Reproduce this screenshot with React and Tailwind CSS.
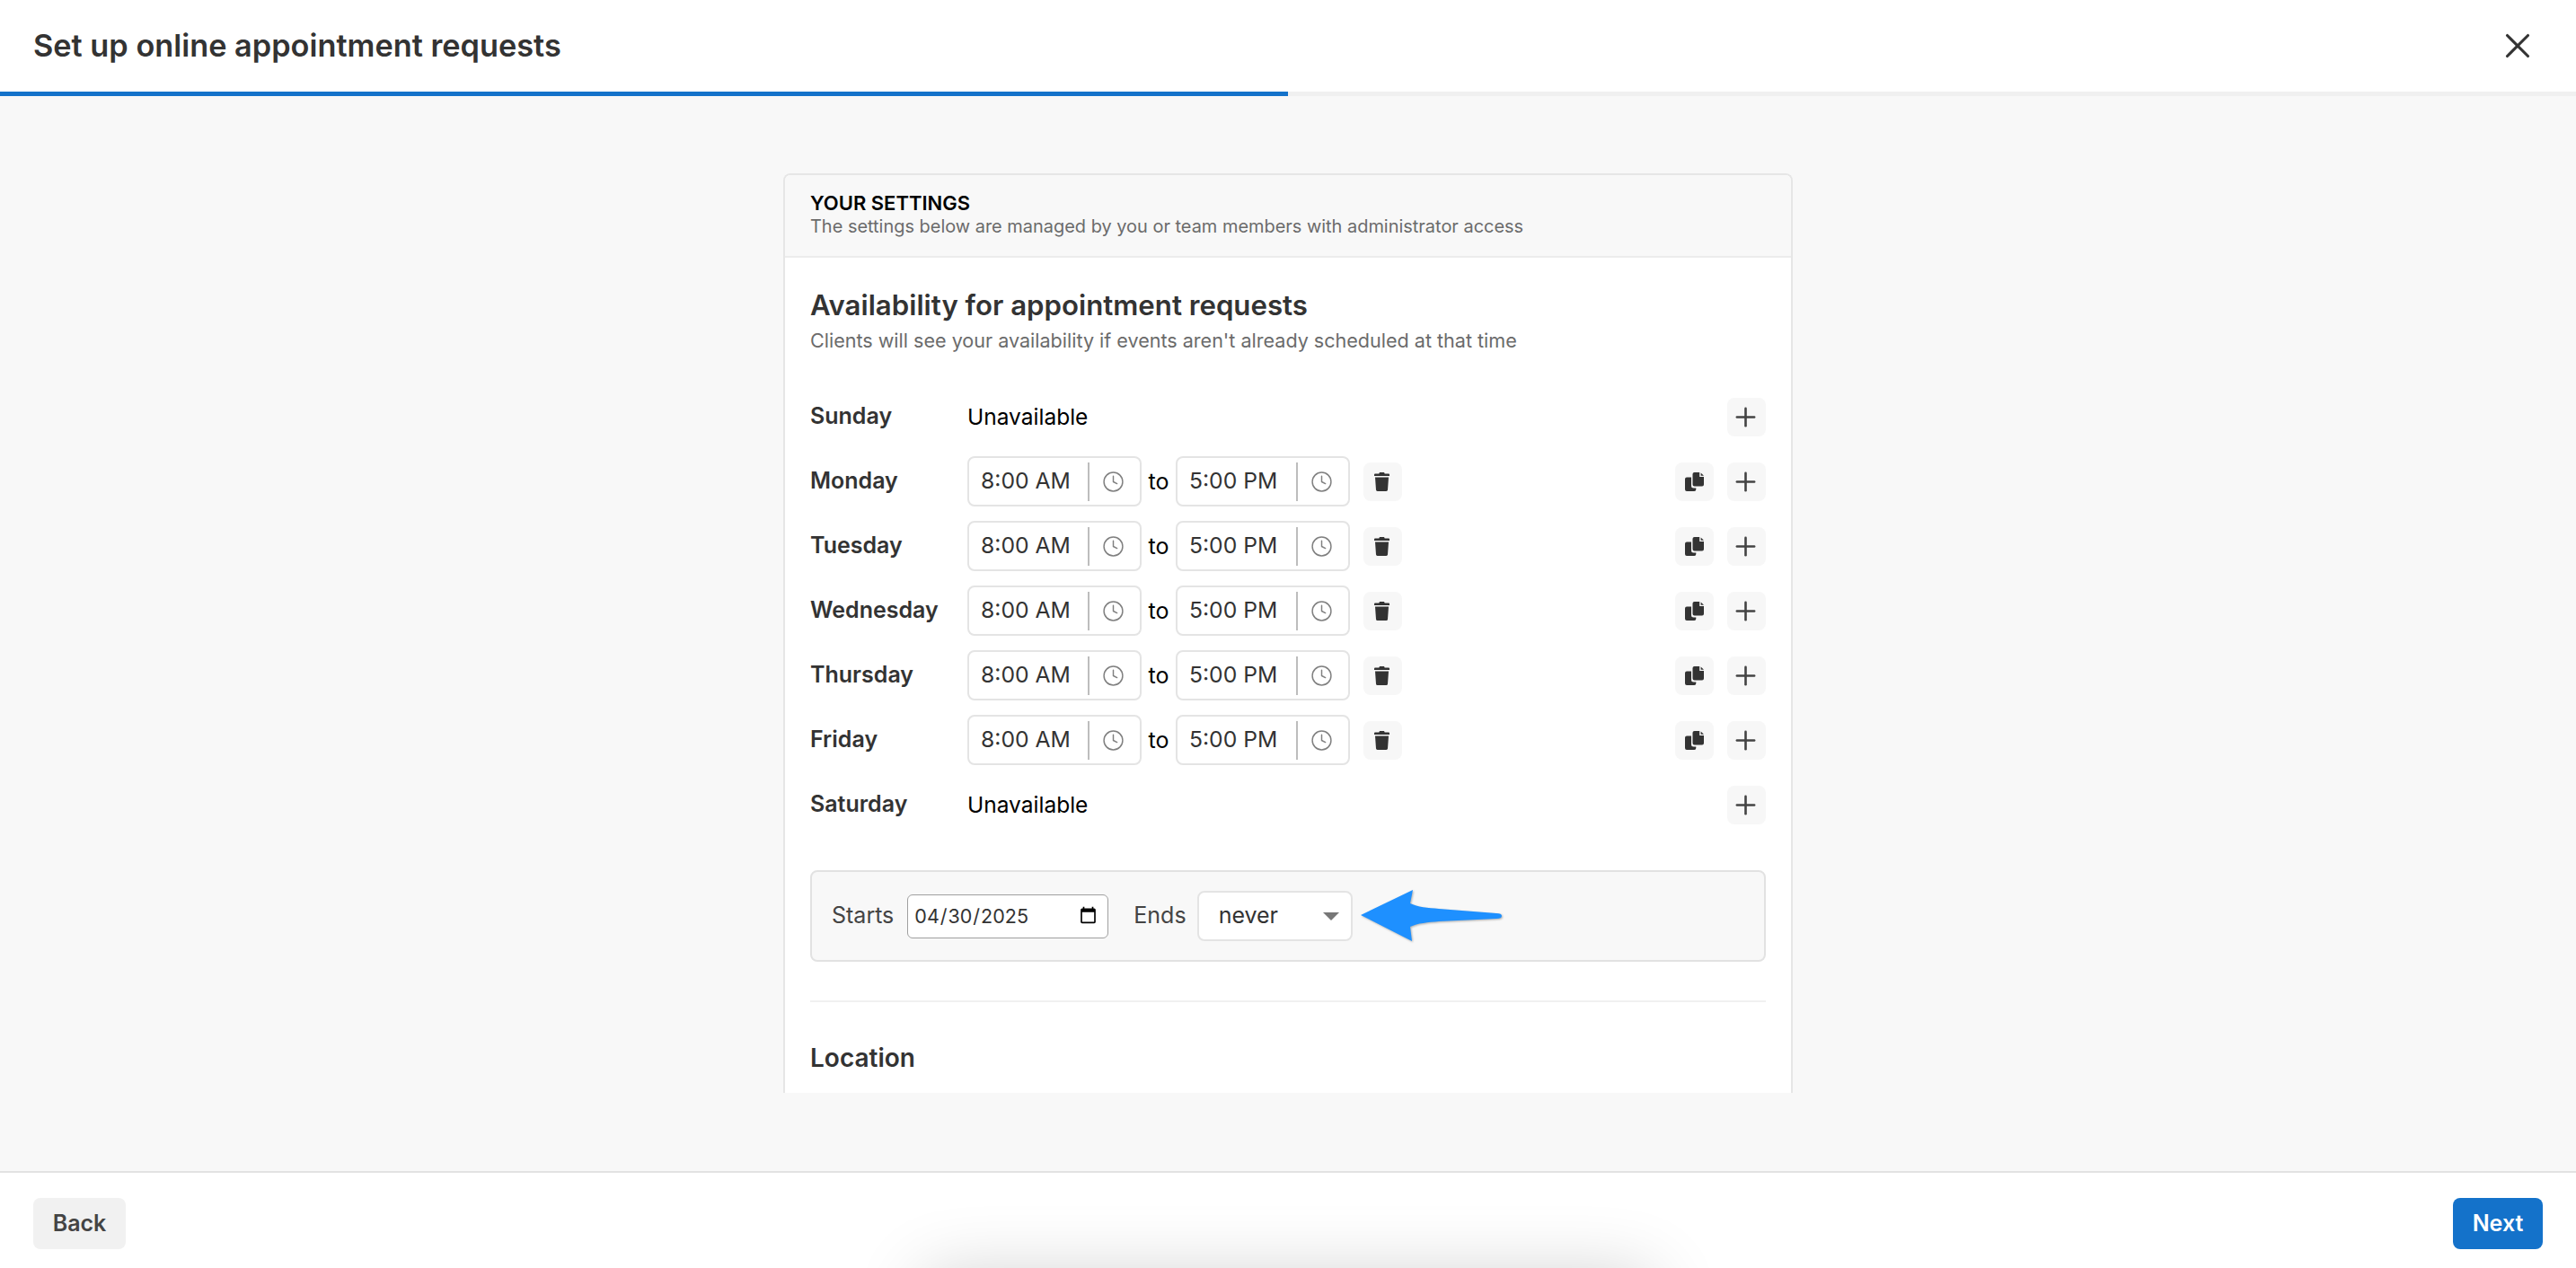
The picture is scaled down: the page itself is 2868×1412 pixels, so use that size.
import { Clock, Plus, X } from 'lucide-react';

const days = [
  { name: 'Sunday', open: false },
  { name: 'Monday', open: true },
  { name: 'Tuesday', open: true },
  { name: 'Wednesday', open: true },
  { name: 'Thursday', open: true },
  { name: 'Friday', open: true },
  { name: 'Saturday', open: false },
];

function TrashIcon() {
  return (
    <svg width="17" height="21" viewBox="0 0 17 21" fill="#333333" className="mr-[2px]">
      <path d="M6 0h5l.7 1.5H16a1 1 0 0 1 1 1V4H0V2.5a1 1 0 0 1 1-1h4.3z" />
      <path d="M1 5.5h15l-1 14a1.6 1.6 0 0 1-1.6 1.5H3.6A1.6 1.6 0 0 1 2 19.5z" />
    </svg>
  );
}

function CopyIcon() {
  return (
    <svg width="21" height="21" viewBox="0 0 21 21" fill="#333333">
      <path d="M2 5.5h5V15a2.5 2.5 0 0 0 2.5 2.5h2.8V19a2 2 0 0 1-2 2H2a2 2 0 0 1-2-2V7.5a2 2 0 0 1 2-2z" />
      <path d="M10.5 0h5.7v5h4.8v8.5a2 2 0 0 1-2 2h-8.5a2 2 0 0 1-2-2V2a2 2 0 0 1 2-2z" />
      <path d="M17.6 .4 21 3.8h-3.4z" />
    </svg>
  );
}

function TimeInput({ value }) {
  return (
    <div className="flex h-[56px] w-[194px] items-center rounded-[8px] border-2 border-[#e4e4e4] bg-white">
      <span className="w-[132px] pl-[13px] text-[24.7px] text-[#333333]">{value}</span>
      <span className="h-[43px] w-[2px] bg-[#bdbdbd]" />
      <span className="flex flex-1 items-center justify-center pr-[4px]">
        <Clock size={25} strokeWidth={1.4} color="#808080" />
      </span>
    </div>
  );
}

function IconButton({ children }) {
  return (
    <button type="button" className="flex h-[43px] w-[43px] items-center justify-center rounded-[8px] bg-[#f7f7f7]">
      {children}
    </button>
  );
}

function DayRow({ day }) {
  return (
    <div className="flex h-[56px] items-center">
      <span className="w-[175px] text-[25px] font-semibold text-[#333333]">{day.name}</span>
      {day.open ? (
        <div className="flex items-center">
          <TimeInput value="8:00 AM" />
          <span className="w-[38px] pt-[2px] text-center text-[25px] text-black">to</span>
          <TimeInput value="5:00 PM" />
          <div className="ml-[15px]">
            <IconButton>
              <TrashIcon />
            </IconButton>
          </div>
        </div>
      ) : (
        <span className="text-[24.5px] text-black">Unavailable</span>
      )}
      <div className="ml-auto flex gap-[15px]">
        {day.open && (
          <IconButton>
            <CopyIcon />
          </IconButton>
        )}
        <IconButton>
          <Plus size={33} strokeWidth={1.9} color="#444444" className="mr-[2px]" />
        </IconButton>
      </div>
    </div>
  );
}

export default function App() {
  return (
    <div
      className="relative flex h-[1412px] flex-col overflow-hidden bg-[#f8f8f8]"
      style={{ fontFamily: 'Inter, "Liberation Sans", sans-serif' }}
    >
      <header className="flex h-[102px] items-center justify-between bg-white pl-[37px] pr-[42px]">
        <h1 className="text-[34.3px] font-semibold text-[#333333]">Set up online appointment requests</h1>
        <X size={46} strokeWidth={1.6} color="#333333" />
      </header>
      <div className="h-[5px] bg-[#f0f0f0]">
        <div className="h-full w-1/2 bg-[#1472ca]" />
      </div>

      <main className="flex flex-1 justify-center overflow-hidden pb-[87px] pt-[86px]">
        <section className="h-full w-[1124px] overflow-hidden rounded-t-[8px] border-x-2 border-t-2 border-[#e6e6e6] bg-white">
          <div className="h-[92px] border-b-2 border-[#ececec] bg-[#f8f8f8] px-[28px] pt-[18px]">
            <h2 className="text-[22px] font-semibold leading-[26px] text-black">YOUR SETTINGS</h2>
            <p className="text-[19.95px] leading-[26px] text-[#6b6b6b]">
              The settings below are managed by you or team members with administrator access
            </p>
          </div>

          <div className="px-[28px] pt-[33px]">
            <h3 className="text-[31.2px] font-semibold leading-[40px] text-[#333333]">
              Availability for appointment requests
            </h3>
            <p className="mt-[6px] text-[21.55px] leading-[26px] text-[#6b6b6b]">
              Clients will see your availability if events aren't already scheduled at that time
            </p>

            <div className="mt-[44px] flex flex-col gap-[16px]">
              {days.map((day) => (
                <DayRow key={day.name} day={day} />
              ))}
            </div>

            <div className="mt-[45px] flex h-[102px] items-center rounded-[8px] border-2 border-[#e2e2e2] bg-[#f8f8f8] pl-[22px]">
              <span className="text-[25px] text-[#444444]">Starts</span>
              <input
                type="date"
                defaultValue="2025-04-30"
                className="ml-[15px] h-[49px] w-[224px] rounded-[6px] border border-[#a0a0a0] bg-white pl-[6px] pr-[9px] text-[21.5px] text-[#333333]"
              />
              <span className="ml-[28px] text-[25px] text-[#444444]">Ends</span>
              <div className="ml-[12px] flex h-[56px] w-[173px] items-center justify-between rounded-[8px] border-2 border-[#e4e4e4] bg-white pl-[22px] pr-[13px] text-[25px] text-[#333333]">
                <span>never</span>
                <svg width="18" height="9" viewBox="0 0 18 9" fill="#777777">
                  <path d="M0 0h18L9 9z" />
                </svg>
              </div>
              <svg
                width="158"
                height="58"
                viewBox="0 0 158 58"
                fill="#1e90ff"
                className="ml-[9px] drop-shadow-[1px_1px_1px_rgba(0,0,0,0.3)]"
              >
                <path d="M0 28 58 0l-3 15c8 4 20 5 32 6l64 5q6 0 6 3t-6 3l-64 3c-12 1-24 2-32 6l2 16z" />
              </svg>
            </div>

            <hr className="mt-[43px] border-t-2 border-[#f0f0f0]" />

            <h3 className="mt-[42px] text-[28px] font-semibold leading-[40px] text-[#333333]">Location</h3>
          </div>
        </section>
      </main>

      <footer className="flex h-[108px] items-center justify-between border-t-2 border-[#e2e2e2] bg-white px-[37px] pt-[7px]">
        <button type="button" className="h-[57px] w-[103px] rounded-[8px] bg-[#f1f1f1] text-[25px] font-semibold text-[#444444]">
          Back
        </button>
        <button type="button" className="h-[57px] w-[100px] rounded-[8px] bg-[#1472ca] text-[25px] font-semibold text-white">
          Next
        </button>
      </footer>

      {/* shadow of something sitting just below the window */}
      <div className="absolute left-[1030px] top-[1420px] h-[100px] w-[808px] shadow-[0_0_80px_rgba(0,0,0,0.19)]" />
    </div>
  );
}
